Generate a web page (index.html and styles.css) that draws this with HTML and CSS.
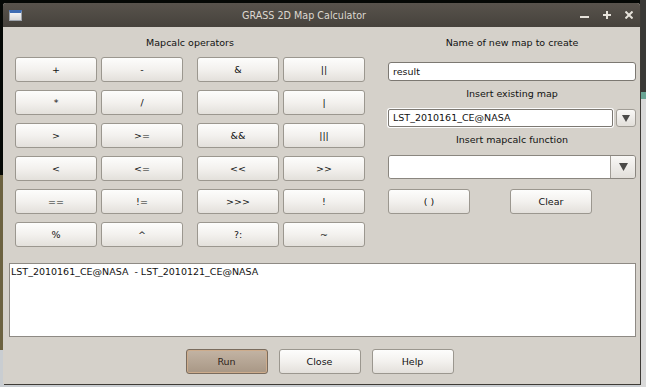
FILE: index.html
```html
<!DOCTYPE html>
<html lang="en">
<head>
    <meta charset="UTF-8">
    <title>GRASS 2D Map Calculator</title>
    <link rel="stylesheet" href="styles.css">
</head>
<body>
    <div class="window">
        <div class="titlebar">
            <span class="win-icon"></span>
            <span class="title">GRASS 2D Map Calculator</span>
            <div class="controls">
                <svg width="9" height="9" viewBox="0 0 9 9"><rect x="0" y="5" width="9" height="2" fill="#e6e2da"/></svg>
                <svg width="8" height="8" viewBox="0 0 8 8"><path d="M4 0V8M0 4H8" stroke="#e6e2da" stroke-width="2"/></svg>
                <svg width="8" height="8" viewBox="0 0 8 8"><path d="M0.5 0.5L7.5 7.5M7.5 0.5L0.5 7.5" stroke="#e6e2da" stroke-width="2"/></svg>
            </div>
        </div>
        <div class="content">
            <div class="top">
                <section class="operators">
                    <div class="label">Mapcalc operators</div>
                    <div class="ops">
                        <div class="ops-group">
                            <button>+</button>
                            <button>-</button>
                            <button>*</button>
                            <button>/</button>
                            <button>&gt;</button>
                            <button>&gt;=</button>
                            <button>&lt;</button>
                            <button>&lt;=</button>
                            <button>==</button>
                            <button>!=</button>
                            <button>%</button>
                            <button>^</button>
                        </div>
                        <div class="ops-group">
                            <button>&amp;</button>
                            <button>||</button>
                            <button></button>
                            <button>|</button>
                            <button>&amp;&amp;</button>
                            <button>|||</button>
                            <button>&lt;&lt;</button>
                            <button>&gt;&gt;</button>
                            <button>&gt;&gt;&gt;</button>
                            <button>!</button>
                            <button>?:</button>
                            <button>~</button>
                        </div>
                    </div>
                </section>
                <section class="map-panel">
                    <div class="label">Name of new map to create</div>
                    <div class="field new-map">result</div>
                    <div class="sub-label">Insert existing map</div>
                    <div class="existing">
                        <div class="field">LST_2010161_CE@NASA</div>
                        <div class="drop-btn">
                            <svg width="8" height="7" viewBox="0 0 8 7"><polygon points="0,0 8,0 4,7" fill="#4b4a48"/></svg>
                        </div>
                    </div>
                    <div class="sub-label">Insert mapcalc function</div>
                    <div class="combo">
                        <div class="combo-field"></div>
                        <div class="combo-arrow">
                            <svg width="9" height="8" viewBox="0 0 9 8"><polygon points="0,0 9,0 4.5,8" fill="#4b4a48"/></svg>
                        </div>
                    </div>
                    <div class="panel-buttons">
                        <button>( )</button>
                        <button>Clear</button>
                    </div>
                </section>
            </div>
            <div class="expression">LST_2010161_CE@NASA&nbsp; - LST_2010121_CE@NASA</div>
            <div class="actions">
                <button class="run">Run</button>
                <button>Close</button>
                <button>Help</button>
            </div>
        </div>
    </div>
</body>
</html>
```

FILE: styles.css
```css
body {
    margin: 0;
    padding: 3px;
    width: 646px;
    height: 387px;
    box-sizing: border-box;
    overflow: hidden;
    font-family: 'DejaVu Sans', 'Liberation Sans', sans-serif;
    font-size: 9.5px;
    color: #111;
    background:
        linear-gradient(to bottom, #3a3936 0, #3a3936 92px, #6aa595 92px, #6aa595 99px, #d9d9d9 99px) right top / 6px 100% no-repeat,
        linear-gradient(to bottom, #050805 0, #050805 175px, #6c6240 175px, #6c6240 350px, #c9cdd1 350px);
}
.window {
    width: 637px;
    height: 381px;
    background-color: #d5d1ca;
    border-radius: 3px 3px 0 0;
    box-shadow: 1px 1px 0 #3e3b36;
}
.titlebar {
    display: flex;
    align-items: center;
    height: 24px;
    padding: 0 7px 0 6px;
    background: linear-gradient(#58534c, #46423c);
    border-radius: 3px 3px 0 0;
    color: #dcd8d0;
    font-size: 9.6px;
}
.win-icon {
    width: 13px;
    height: 11px;
    box-sizing: border-box;
    border: 1px solid #9ca2aa;
    border-top: 3px solid #3f6db3;
    background: linear-gradient(#f4f4f4, #d8d8d8);
}
.title {
    flex: 1;
    text-align: center;
    padding-left: 6px;
}
.controls {
    display: flex;
    align-items: center;
    gap: 14px;
}
.controls svg {
    display: block;
}
.content {
    height: 357px;
    padding: 0 4px 0 6px;
    box-sizing: border-box;
}
.top {
    display: flex;
    height: 220px;
}
.label {
    height: 30px;
    box-sizing: border-box;
    padding-top: 10px;
    line-height: 12px;
    text-align: center;
}
.operators {
    margin-left: 6px;
    width: 350px;
}
.ops {
    display: flex;
    gap: 14px;
}
.ops-group {
    display: grid;
    grid-template-columns: repeat(2, 82px);
    gap: 8px 4px;
}
button {
    height: 25px;
    width: 82px;
    padding: 0;
    font-family: inherit;
    font-size: 9.5px;
    color: #111;
    border: 1px solid #9b978f;
    border-radius: 3px;
    background: linear-gradient(#fdfdfc 0%, #f3f1ee 50%, #e3e0db 100%);
}
.map-panel {
    margin-left: 23px;
    width: 248px;
}
.field {
    height: 19px;
    box-sizing: border-box;
    padding: 0 4px;
    line-height: 17px;
    background-color: #fff;
    border: 1px solid #7c7872;
    border-radius: 3px;
}
.new-map {
    margin-top: 5px;
}
.sub-label {
    margin-top: 7px;
    line-height: 12px;
    text-align: center;
}
.existing {
    display: flex;
    gap: 3px;
    margin-top: 9px;
    height: 18px;
}
.existing .field {
    flex: 1;
    height: 18px;
    line-height: 16px;
    border-radius: 2px;
    box-shadow: 0 0 0 1px #fcfcfc;
}
.drop-btn {
    width: 20px;
    display: flex;
    align-items: center;
    justify-content: center;
    border: 1px solid #a19d96;
    border-radius: 3px;
    box-sizing: border-box;
    background: linear-gradient(#f9f8f6, #e2dfda);
}
.combo {
    display: flex;
    height: 24px;
    margin-top: 9px;
    box-sizing: border-box;
    border: 1px solid #8a867f;
    border-radius: 3px;
    overflow: hidden;
}
.combo-field {
    flex: 1;
    background-color: #fff;
}
.combo-arrow {
    width: 24px;
    display: flex;
    align-items: center;
    justify-content: center;
    border-left: 1px solid #a19d96;
    background: linear-gradient(#f9f8f6, #e2dfda);
}
.panel-buttons {
    display: flex;
    gap: 40px;
    margin-top: 10px;
}
.expression {
    margin-top: 16px;
    height: 74px;
    box-sizing: border-box;
    padding: 2px 1px;
    line-height: 12px;
    background-color: #fff;
    border: 1px solid #8e8a84;
}
.actions {
    display: flex;
    justify-content: center;
    gap: 11px;
    margin-top: 12px;
    padding-right: 6px;
}
.actions .run {
    color: #2e241b;
    border-color: #7a6c5e;
    background: linear-gradient(#c3b4a4, #a89785);
    box-shadow: inset 0 0 0 1px #cdac8c;
}
```
